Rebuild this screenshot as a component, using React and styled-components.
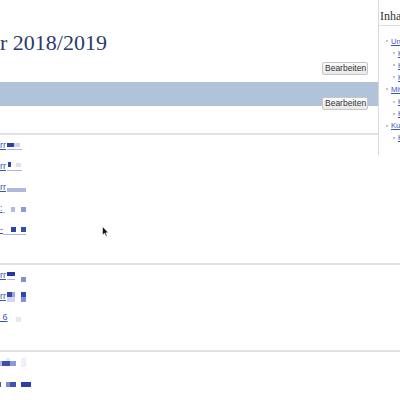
import React from "react";
import styled, { createGlobalStyle } from "styled-components";

const Global = createGlobalStyle`
  html, body { margin: 0; padding: 0; background: #fff; }
  body { overflow: hidden; }
`;

const Page = styled.div`
  position: relative;
  width: 400px;
  height: 400px;
  overflow: hidden;
  background: #fff;
  font-family: "Liberation Sans", Arial, sans-serif;
`;

const Toc = styled.nav`
  float: right;
  width: 22px;
  height: 155px;
  box-sizing: border-box;
  border-left: 1px solid #d8d8d8;
  padding: 7px 0 0 0;
  overflow: hidden;
  white-space: nowrap;
  background: #fff;
`;

const TocTitle = styled.div`
  font-family: "Liberation Serif", "DejaVu Serif", serif;
  font-size: 12px;
  line-height: 18px;
  color: #333;
  padding-left: 1px;
  border-bottom: 1px solid #ddd;
`;

const TocList = styled.ul`
  list-style: none;
  margin: 0;
  padding: 9px 0 0 0;
`;

const TocItem = styled.li`
  display: flex;
  align-items: center;
  height: 12.1px;
  padding-left: ${(p) => (p.$level === 2 ? 14 : 7)}px;
  font-size: 7.5px;
`;

const Bullet = styled.span`
  width: 2px;
  height: 2px;
  background: #c4c4c4;
  margin-right: 3px;
  flex: none;
`;

const TocLink = styled.a`
  color: #3a56b8;
  text-decoration: underline;
`;

const Title = styled.h1`
  margin: 29px 0 0 0;
  font-family: "Liberation Serif", "DejaVu Serif", serif;
  font-weight: normal;
  font-size: 22px;
  line-height: 28px;
  color: #2b3b68;
`;

const EditRow = styled.div`
  display: flex;
  justify-content: flex-end;
  padding-right: 10px;
  margin-top: ${(p) => p.$top || 0}px;
`;

const EditButton = styled.button`
  height: 13px;
  padding: 0 2px;
  margin: 0;
  box-sizing: border-box;
  border: 1px solid #c6c6c6;
  border-radius: 2px;
  background: linear-gradient(#fafafa, #e9e9e9);
  font-family: "Liberation Sans", Arial, sans-serif;
  font-size: 8.5px;
  line-height: 11px;
  color: #333;
  width: 46px;
`;

const Band = styled.div`
  display: flex;
  justify-content: flex-end;
  align-items: flex-end;
  height: 24px;
  margin-top: 7px;
  padding-right: 10px;
  background: #b0c3d8;
`;

const BandButton = styled(EditButton)`
  margin-bottom: -4px;
`;

const Rule = styled.div`
  display: flow-root;
  height: 2px;
  background: #e2e2e2;
  margin-top: ${(p) => p.$top}px;
`;

const List = styled.div`
  display: flex;
  flex-direction: column;
`;

const Row = styled.div`
  display: grid;
  height: 21px;
  & > * {
    grid-area: 1 / 1;
  }
`;

const RowLink = styled.a`
  justify-self: start;
  font-size: 9px;
  line-height: 21px;
  color: #3a56b0;
  text-decoration: underline;
  white-space: pre;
`;

const Mosaic = styled.svg`
  display: block;
  width: 34px;
  height: 21px;
`;

const Cursor = styled.svg`
  position: absolute;
  left: 102px;
  top: 226px;
  width: 7px;
  height: 11px;
`;

const tocItems = [
  { level: 1, text: "Unterricht" },
  { level: 2, text: "Klasse 5" },
  { level: 2, text: "Klasse 6" },
  { level: 2, text: "Klasse 7" },
  { level: 1, text: "Mitteilungen" },
  { level: 2, text: "Klasse 8" },
  { level: 2, text: "Klasse 9" },
  { level: 1, text: "Kurse" },
  { level: 2, text: "Kurs 10" },
];

const sections = [
  {
    top: 27,
    rows: [
      { text: "rr", ul: [7, 22, 14], blocks: [[7, 8, 7, 4, "#2f3fa3"], [14, 8, 6, 4, "#cdd3ee"]] },
      { text: "rr", ul: [7, 22, 14], blocks: [[8, 6, 3, 5, "#2f44a8"], [16, 7, 5, 4, "#dde1f2"]] },
      { text: "rr", ul: [7, 26, 14], blocks: [[7, 11, 19, 4, "#b0b8e0"]] },
      { text: ":", ul: [3, 5, 14], blocks: [[11, 9, 4, 5, "#b3badf"], [21, 9, 5, 5, "#8e9ad6"]] },
      { text: "-", ul: [3, 26, 15], blocks: [[11, 8, 5, 5, "#2c44a8"], [21, 8, 5, 5, "#3050b0"]] },
    ],
  },
  {
    top: 23,
    rows: [
      { text: "rr", ul: [7, 15, 14], blocks: [[7, 7, 8, 4, "#2636a0"], [21, 12, 5, 5, "#8090d0"]] },
      { text: "rr", ul: [7, 15, 14], blocks: [[7, 6, 5, 5, "#3448b0"], [12, 6, 3, 5, "#9aa6dc"], [7, 11, 8, 5, "#d0d6ef"], [21, 6, 5, 5, "#2f47b0"], [21, 11, 5, 5, "#8090d0"]] },
      { text: "\u00a06", ul: [7, 7, 14], blocks: [[16, 10, 5, 5, "#e6e9f5"]] },
    ],
  },
  {
    top: 22,
    rows: [
      { text: "", ul: null, blocks: [[0, 9, 2, 5, "#b0b8e4"], [2, 9, 8, 5, "#3a50b0"], [10, 9, 6, 5, "#8e9ad6"], [6, 6, 4, 3, "#e6e9f5"], [21, 6, 5, 9, "#eef0f8"]] },
      { text: "", ul: null, blocks: [[0, 9, 1, 5, "#4a5ab8"], [6, 9, 4, 5, "#7d8bd0"], [10, 9, 6, 5, "#3c52b4"], [21, 9, 10, 5, "#2a40a8"]] },
    ],
  },
];

function LinkRow({ text, ul, blocks }) {
  return (
    <Row>
      {text ? <RowLink href="#">{text}</RowLink> : null}
      <Mosaic viewBox="0 0 34 21" aria-hidden="true">
        {ul ? <rect x={ul[0]} y={ul[2]} width={ul[1] - ul[0]} height="0.8" fill="#9aa6dc" /> : null}
        {blocks.map((b, i) => (
          <rect key={i} x={b[0]} y={b[1]} width={b[2]} height={b[3]} fill={b[4]} />
        ))}
      </Mosaic>
    </Row>
  );
}

export default function App() {
  return (
    <Page>
      <Global />
      <Toc>
        <TocTitle>Inhaltsverzeichnis</TocTitle>
        <TocList>
          {tocItems.map((t, i) => (
            <TocItem key={i} $level={t.level}>
              <Bullet />
              <TocLink href="#">{t.text}</TocLink>
            </TocItem>
          ))}
        </TocList>
      </Toc>
      <Title>r 2018/2019</Title>
      <EditRow $top={5}>
        <EditButton>Bearbeiten</EditButton>
      </EditRow>
      <Band>
        <BandButton>Bearbeiten</BandButton>
      </Band>
      {sections.map((s, si) => (
        <React.Fragment key={si}>
          <Rule $top={s.top} />
          <List>
            {s.rows.map((r, ri) => (
              <LinkRow key={ri} {...r} />
            ))}
          </List>
        </React.Fragment>
      ))}
      <Cursor viewBox="0 0 7 11" aria-hidden="true">
        <path d="M0.5 0.5 L0.5 9 L2.5 7.2 L3.9 10.3 L5.1 9.8 L3.8 6.8 L6.3 6.8 Z" fill="#111" stroke="#fff" strokeWidth="0.6" />
      </Cursor>
    </Page>
  );
}
